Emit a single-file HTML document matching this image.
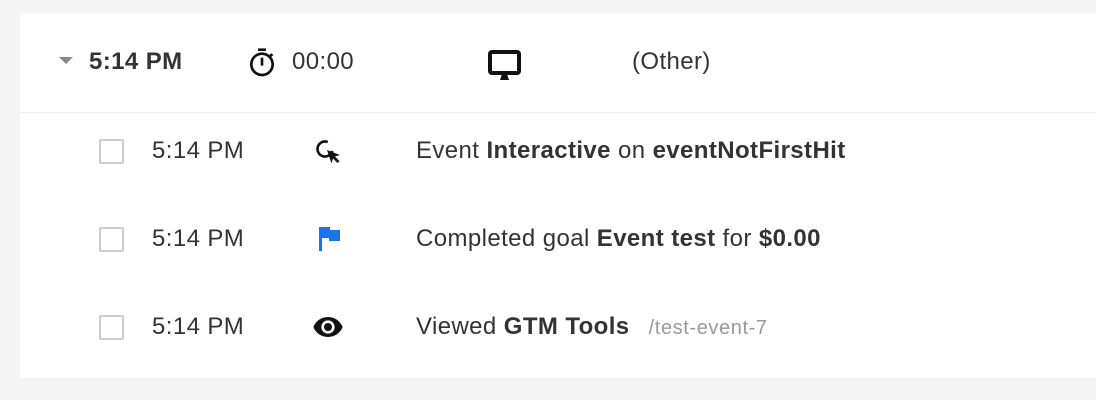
<!DOCTYPE html>
<html><head><style>
body{margin:0;background:#f5f5f5;width:1096px;height:400px;overflow:hidden;font-family:"Liberation Sans",Arial,sans-serif;color:#333;}
.panel{position:absolute;left:20px;top:13px;width:1076px;height:365px;background:#fff;}
.hdr{position:absolute;left:0;top:0;width:1076px;height:99px;border-bottom:1px solid #eee;}
.a{position:absolute;font-size:24px;line-height:28px;white-space:nowrap;letter-spacing:0.4px;}
b{font-weight:bold;}
.cb{position:absolute;left:79px;width:25px;height:25px;border:2px solid #ccc;border-radius:2px;box-sizing:border-box;}
</style></head><body>
<div class="panel">
<div class="hdr">
<svg style="position:absolute;left:39px;top:44px" width="14" height="8"><path d="M0 0H14L7 7Z" fill="#888"/></svg>
<div class="a" style="left:69px;top:35px;font-weight:bold">5:14 PM</div>
<svg style="position:absolute;left:226px;top:34px" width="32" height="32" viewBox="0 0 24 24"><path fill="#111" d="M15 1H9v2h6V1zm-4 13h2V8h-2v6zm8.03-6.61l1.42-1.42c-.43-.51-.9-.99-1.41-1.41l-1.42 1.42C16.07 4.74 14.12 4 12 4c-4.97 0-9 4.03-9 9s4.02 9 9 9 9-4.03 9-9c0-2.12-.74-4.07-1.97-5.61zM12 20c-3.87 0-7-3.13-7-7s3.13-7 7-7 7 3.13 7 7-3.13 7-7 7z"/></svg>
<div class="a" style="left:272px;top:35px">00:00</div>
<svg style="position:absolute;left:468px;top:37px" width="33" height="30" viewBox="0 0 33 30"><rect x="2" y="2" width="29" height="21" rx="2" fill="none" stroke="#111" stroke-width="4"/><path d="M12 30L14 24H19L21 30Z" fill="#111"/></svg>
<div class="a" style="left:612px;top:35px">(Other)</div>
</div>
<div class="cb" style="top:126px"></div>
<div class="a" style="left:132px;top:124px">5:14 PM</div>
<svg style="position:absolute;left:295px;top:126px" width="28" height="26" viewBox="0 0 28 26"><circle cx="10" cy="10" r="7.5" fill="none" stroke="#111" stroke-width="2.6" stroke-dasharray="36 11" transform="rotate(15 10 10)"/><path fill="#111" d="M12 11l13 5-5 1.5 4.5 4.5-2 2-4.5-4.5-1.5 5z"/></svg>
<div class="a" style="left:396px;top:124px">Event <b>Interactive</b> on <b>eventNotFirstHit</b></div>
<div class="cb" style="top:214px"></div>
<div class="a" style="left:132px;top:212px">5:14 PM</div>
<svg style="position:absolute;left:298px;top:214px" width="24" height="24" viewBox="0 0 24 24"><path fill="#1a73e8" d="M1 0H12V3H22V14H11V11H4V24H1Z"/></svg>
<div class="a" style="left:396px;top:212px">Completed goal <b>Event test</b> for <b>$0.00</b></div>
<div class="cb" style="top:302px"></div>
<div class="a" style="left:132px;top:300px">5:14 PM</div>
<svg style="position:absolute;left:292px;top:298px" width="32" height="32" viewBox="0 0 24 24"><path fill="#111" d="M12 4.5C7 4.5 2.73 7.61 1 12c1.73 4.39 6 7.5 11 7.5s9.27-3.11 11-7.5c-1.73-4.39-6-7.5-11-7.5zM12 17c-2.760 0-5-2.24-5-5s2.24-5 5-5 5 2.24 5 5-2.24 5-5 5zm0-8c-1.66 0-3 1.34-3 3s1.34 3 3 3 3-1.34 3-3-1.34-3-3-3z"/></svg>
<div class="a" style="left:396px;top:300px">Viewed <b>GTM Tools</b> <span style="font-size:20px;color:#999;margin-left:12px;letter-spacing:0.6px">/test-event-7</span></div>
</div>
</body></html>
